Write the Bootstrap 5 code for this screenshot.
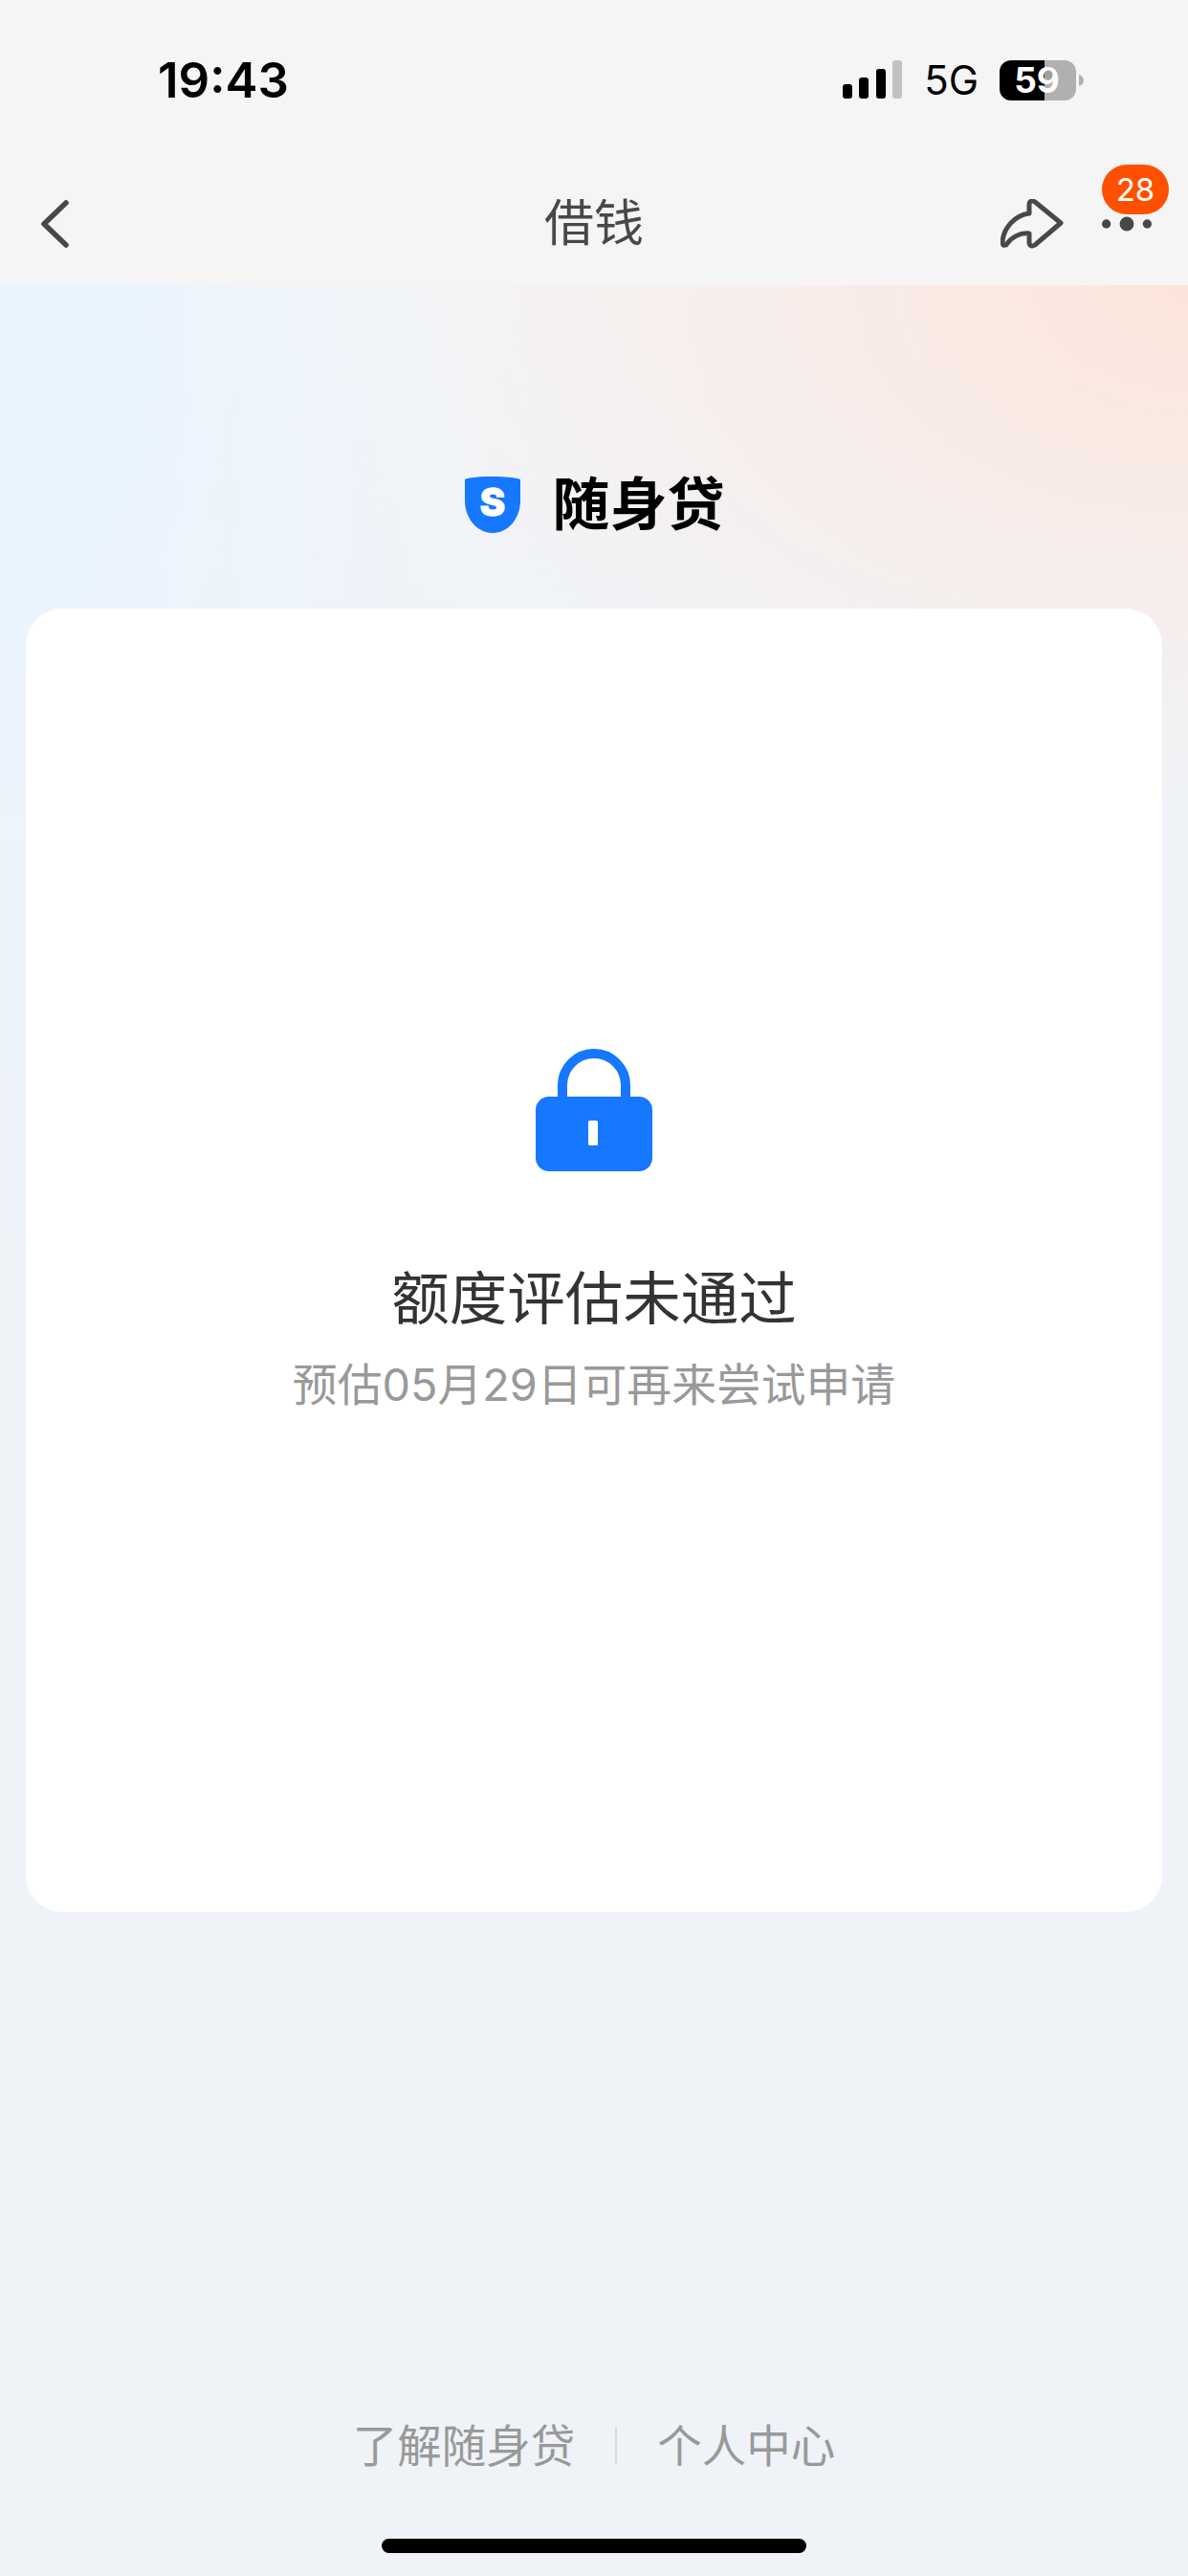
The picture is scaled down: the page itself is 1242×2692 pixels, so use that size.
<!DOCTYPE html>
<html lang="zh-CN">
<head>
  <meta charset="UTF-8" />
  <meta name="viewport" content="width=device-width, initial-scale=1.0" />
  <title>借钱</title>
  <link href="https://cdn.jsdelivr.net/npm/bootstrap@5.3.3/dist/css/bootstrap.min.css" rel="stylesheet" />
  <style>
    body {
      font-family: Inter, "Noto Sans CJK SC", sans-serif;
      background: #eff3f8;
    }
    .phone-page {
      width: 1242px;
      height: 2692px;
      overflow: hidden;
      background:
        radial-gradient(ellipse 820px 560px at 100% 298px, #fce5db 0%, rgba(250, 234, 228, .75) 45%, rgba(250, 234, 228, 0) 100%),
        radial-gradient(ellipse 520px 1050px at 0 298px, #e8f5ff 0%, rgba(234, 245, 255, .7) 45%, rgba(232, 245, 255, 0) 100%),
        linear-gradient(180deg, #f4f4f6 298px, #eff3f8 800px);
    }
    .top-bar { height: 298px; background: #f5f5f5; }
    .status-row { height: 170px; padding: 62px 109px 0 165px; }
    .status-time { font-size: 51px; font-weight: 600; line-height: 44px; color: #000; }
    .status-net { font-size: 42px; line-height: 44px; color: #000; margin: 0 21px 0 23px; }
    .status-battery { font-size: 37px; font-weight: 700; }
    .nav-row { height: 128px; padding: 0 20px 0 40px; }
    .nav-title { font-size: 52px; color: #484848; line-height: 1; }
    .nav-tools { gap: 40px; }
    .more-btn { width: 70px; height: 128px; }
    .more-dots { margin-right: 18px; }
    .msg-count {
      top: 2px;
      left: 0;
      width: 70px;
      height: 52px;
      border-radius: 26px;
      background: #ff5000;
      color: #fff;
      font-size: 33px;
      line-height: 52px;
    }
    .brand-row { height: 338px; padding-top: 120px; gap: 33px; }
    .brand-name { font-size: 60px; font-weight: 700; color: #000; line-height: 1; }
    .result-panel {
      width: 1188px;
      height: 1362px;
      margin: 0 27px;
      border-radius: 38px;
      background: #fff;
      padding-top: 460px;
    }
    .result-title { font-size: 60.5px; color: #333; line-height: 84px; margin-top: 91px; }
    .result-note { font-size: 46.8px; color: #999; line-height: 66px; margin-top: 15px; }
    .foot-links { margin-top: 518px; height: 80px; }
    .foot-link { font-size: 46.5px; color: #999; line-height: 1; }
    .foot-line { width: 2px; height: 40px; background: #d8dce0; margin: 0 42px; }
    .home-bar { width: 444px; height: 15px; border-radius: 8px; background: #000; margin: 57px auto 0; }
  </style>
</head>
<body class="m-0">
  <div class="phone-page d-flex flex-column">
    <!-- status + nav -->
    <div class="top-bar">
      <div class="status-row d-flex justify-content-between align-items-start">
        <div class="status-time">19:43</div>
        <div class="d-flex align-items-center">
          <svg width="62" height="44" viewBox="0 0 62 44">
            <rect x="0" y="26" width="10" height="15" rx="3" fill="#000"/>
            <rect x="17" y="19" width="10" height="22" rx="3" fill="#000"/>
            <rect x="35" y="10" width="10" height="31" rx="3" fill="#000"/>
            <rect x="52" y="1" width="10" height="40" rx="3" fill="#c2c2c2"/>
          </svg>
          <div class="status-net">5G</div>
          <svg width="89" height="44" viewBox="0 0 89 44">
            <path d="M48 1H69a12 12 0 0 1 12 12V31a12 12 0 0 1-12 12H48Z" fill="#b0b0b0"/>
            <path d="M48 1H13A12 12 0 0 0 1 13V31a12 12 0 0 0 12 12H48Z" fill="#000"/>
            <path d="M84 16c3 1 5 3 5 6s-2 5-5 6Z" fill="#b0b0b0"/>
            <text class="status-battery" x="40" y="35" fill="#fff" text-anchor="middle">59</text>
            <circle cx="52" cy="16" r="4.5" fill="#a0a0a0"/>
          </svg>
        </div>
      </div>
      <div class="nav-row position-relative d-flex justify-content-between align-items-center">
        <svg width="36" height="50" viewBox="0 0 36 50">
          <path d="M29 3 6 25l23 22" fill="none" stroke="#484848" stroke-width="5.5" stroke-linecap="round" stroke-linejoin="round"/>
        </svg>
        <div class="nav-title position-absolute top-50 start-50 translate-middle">借钱</div>
        <div class="nav-tools d-flex align-items-center">
          <svg width="66" height="52" viewBox="0 0 66 52">
            <path d="M36 3 63 25 36 48c-3 2-6 1-6-3V36C20 35 11 40 6 48c-3 1-4 0-4-3 1-15 13-28 28-30V6c0-4 3-5 6-3Z" fill="none" stroke="#484848" stroke-width="5" stroke-linejoin="round"/>
          </svg>
          <div class="more-btn position-relative d-flex align-items-center justify-content-center">
            <div class="msg-count position-absolute text-center">28</div>
            <svg class="more-dots" width="56" height="18" viewBox="0 0 56 18">
              <circle cx="5" cy="9" r="5" fill="#484848"/>
              <circle cx="28" cy="9" r="8" fill="#484848"/>
              <circle cx="51" cy="9" r="5" fill="#484848"/>
            </svg>
          </div>
        </div>
      </div>
    </div>

    <!-- brand -->
    <div class="brand-row d-flex align-items-center justify-content-center">
      <svg width="60" height="60" viewBox="0 0 60 60">
        <path d="M1 4C10 0 50 0 59 4V26C59 45 46 60 30 60S1 45 1 26Z" fill="#1677ff"/>
        <text x="30" y="42" fill="#fff" stroke="#fff" stroke-width="1.5" font-size="40" font-weight="800" font-family="Inter" text-anchor="middle">S</text>
      </svg>
      <div class="brand-name">随身贷</div>
    </div>

    <!-- result card -->
    <div class="result-panel text-center">
      <svg width="122" height="128" viewBox="0 0 122 128">
        <path d="M28 52V38a33 33 0 0 1 66 0V52" fill="none" stroke="#1677ff" stroke-width="10"/>
        <rect x="0" y="50" width="122" height="78" rx="14" fill="#1677ff"/>
        <rect x="55" y="75" width="10" height="26" rx="1.5" fill="#fff"/>
      </svg>
      <div class="result-title">额度评估未通过</div>
      <div class="result-note">预估05月29日可再来尝试申请</div>
    </div>

    <!-- footer -->
    <div class="foot-links d-flex align-items-center justify-content-center">
      <div class="foot-link">了解随身贷</div>
      <div class="foot-line"></div>
      <div class="foot-link">个人中心</div>
    </div>
    <div class="home-bar"></div>
  </div>

  <script src="https://cdn.jsdelivr.net/npm/bootstrap@5.3.3/dist/js/bootstrap.bundle.min.js"></script>
</body>
</html>
